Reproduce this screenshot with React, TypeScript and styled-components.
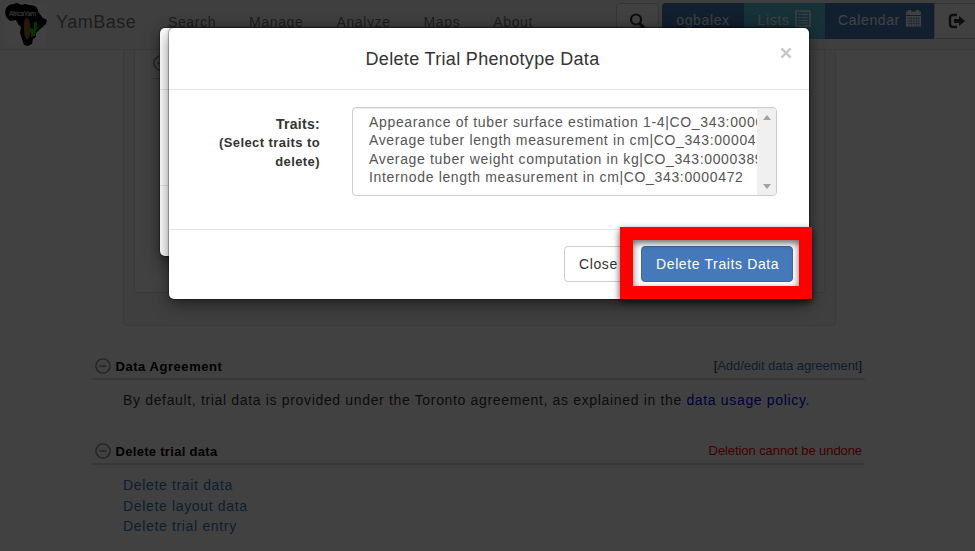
import React from "react";
import styled, { createGlobalStyle } from "styled-components";

const GlobalStyle = createGlobalStyle`
  * { box-sizing: border-box; }
  body {
    margin: 0;
    overflow: hidden;
    background: #fff;
    color: #333;
    font: 14px/20px "Liberation Sans", Arial, sans-serif;
    letter-spacing: 0.62px;
  }
`;

const Page = styled.div`
  position: relative;
  height: 551px;
  overflow: hidden;
  white-space: nowrap;
`;

const Navbar = styled.header`
  display: flex;
  height: 50px;
  background: #f8f8f8;
  border-bottom: 1px solid #e3e3e3;
`;

const Logo = styled.svg`
  width: 43px;
  height: 46px;
  margin: 1px 0 0 4px;
  flex: none;
`;

const Brand = styled.div`
  flex: none;
  width: 121px;
  padding: 12px 0 0 9px;
  font-size: 18px;
  letter-spacing: 0.5px;
  color: #777;
`;

const NavLinks = styled.nav`
  display: flex;
  flex: none;
  width: 448px;
  padding-top: 12px;
  gap: 33px;
  color: #777;
`;

const NavButtons = styled.div`
  display: flex;
  flex: none;
  padding-top: 3px;
`;

const NavButton = styled.div<{ $bg: string; $w: number; $left?: boolean; $outlined?: boolean; $gap?: number }>`
  display: flex;
  align-items: center;
  justify-content: center;
  gap: 6px;
  flex: none;
  width: ${(p) => p.$w}px;
  height: 36px;
  margin-right: ${(p) => p.$gap ?? 0}px;
  padding-bottom: 2px;
  color: ${(p) => (p.$outlined ? "#333" : "#fff")};
  background: ${(p) => p.$bg};
  border: ${(p) => (p.$outlined ? "1px solid #ccc" : "0")};
  border-radius: ${(p) => (p.$left ? "4px 0 0 4px" : p.$gap ? "4px" : "0")};

  svg {
    flex: none;
    position: relative;
    top: ${(p) => (p.$outlined ? "1px" : "-2px")};
  }
`;

const Well = styled.div`
  width: 713px;
  height: 276px;
  margin-left: 123px;
  padding: 0 10px 32px;
  background: #f5f5f5;
  border: 1px solid #e3e3e3;
  border-top: 0;
  border-radius: 0 0 4px 4px;
`;

const WellPanel = styled.div`
  height: 100%;
  padding: 5px 16px 0 18px;
  background: #fff;
  border: 1px solid #e3e3e3;
  border-top: 0;
  border-radius: 0 0 4px 4px;
`;

const PanelRule = styled.div`
  height: 24px;
  border-bottom: 1px solid #ccc;
`;

const Section = styled.section`
  width: 773px;
  margin-left: 92px;
  height: 85px;
`;

const Sections = styled.main`
  padding-top: 29px;
`;

const SectionHead = styled.div`
  display: flex;
  align-items: center;
  height: 25px;
  padding: 0 3px 2px;
  border-bottom: 2px solid #dcdcdc;
`;

const SectionTitle = styled.h3<{ $spacing: number }>`
  margin: 0 auto 0 4.5px;
  padding-top: 2px;
  color: #000;
  font-size: 13px;
  letter-spacing: ${(p) => p.$spacing}px;
`;

const SectionNote = styled.span<{ $danger?: boolean }>`
  font-size: 13px;
  letter-spacing: ${(p) => (p.$danger ? "-0.08px" : "-0.05px")};
  color: ${(p) => (p.$danger ? "#f00" : "#333")};
`;

const SectionBody = styled.div`
  padding: 10px 0 0 31px;
  line-height: 20.7px;
  letter-spacing: 0.66px;
`;

const Link = styled.a<{ $plain?: boolean }>`
  color: ${(p) => (p.$plain ? "#0000ee" : "#337ab7")};
`;

const LinkRow = styled.div`
  height: 20.7px;
`;

const Backdrop = styled.div`
  position: absolute;
  inset: 0;
  background: rgba(0, 0, 0, 0.745);
`;

const Dialog = styled.div<{ $x: number; $h: number }>`
  position: absolute;
  left: ${(p) => p.$x}px;
  top: 28px;
  width: 640px;
  height: ${(p) => p.$h}px;
  display: flex;
  flex-direction: column;
  background: #fff;
  border-radius: 5px;
  box-shadow: 0 5px 15px rgba(0, 0, 0, 0.5), 0 0 1px 1px rgba(0, 0, 0, 0.3);
`;

const DialogHead = styled.div`
  display: flex;
  flex: none;
  align-items: center;
  height: 62px;
  padding: 0 17px 0 16px;
  border-bottom: 1px solid #e5e5e5;
`;

const DialogTitle = styled.h4`
  flex: 1;
  margin: 0;
  font-size: 18px;
  font-weight: 400;
  letter-spacing: 0.33px;
  text-align: center;
`;

const CloseIcon = styled.svg`
  width: 12px;
  height: 12px;
  margin-bottom: 11px;
`;

const DialogBody = styled.div`
  display: flex;
  flex: 1;
  align-items: flex-start;
  gap: 32px;
  padding: 17px 0 0 41px;
`;

const FieldLabel = styled.label`
  width: 110px;
  padding-top: 7px;
  font-weight: 700;
  letter-spacing: 0.3px;
  text-align: right;
`;

const LabelHint = styled.div`
  font-size: 13px;
  line-height: 18.5px;
  letter-spacing: 0.42px;
`;

const ListBox = styled.div`
  display: flex;
  width: 425px;
  height: 89px;
  overflow: hidden;
  color: #555;
  border: 1px solid #ccc;
  border-radius: 4px;
  box-shadow: inset 0 1px 1px rgba(0, 0, 0, 0.075);
`;

const Options = styled.div`
  flex: 1;
  min-width: 0;
  overflow: hidden;
  padding: 5px 0 0 16px;
`;

const Option = styled.div<{ $spacing: number }>`
  height: 18.4px;
  line-height: 18.4px;
  letter-spacing: ${(p) => p.$spacing}px;
`;

const Scrollbar = styled.div`
  display: flex;
  flex: none;
  flex-direction: column;
  align-items: center;
  justify-content: space-between;
  width: 19px;
  margin-top: 1px;
  padding: 6px 0;
  background: #f0f0f0;
`;

const Arrow = styled.i<{ $down?: boolean }>`
  border: 4.5px solid transparent;
  border-top: ${(p) => (p.$down ? "5px solid #a3a3a3" : "0")};
  border-bottom: ${(p) => (p.$down ? "0" : "5px solid #a3a3a3")};
`;

const DialogFoot = styled.div<{ $h: number }>`
  display: flex;
  flex: none;
  justify-content: flex-end;
  gap: 9px;
  height: ${(p) => p.$h}px;
  padding: 16px 16px 0;
  border-top: 1px solid #e5e5e5;
`;

const Button = styled.div<{ $primary?: boolean; $w: number }>`
  width: ${(p) => p.$w}px;
  height: 36px;
  padding-left: 14px;
  line-height: 34px;
  border: 1px solid ${(p) => (p.$primary ? "#3b6ba6" : "#ccc")};
  border-radius: 4px;
  color: ${(p) => (p.$primary ? "#fff" : "#333")};
  background: ${(p) => (p.$primary ? "#4679ba" : "#fff")};
`;

const Highlight = styled.div`
  position: absolute;
  left: 620px;
  top: 227px;
  width: 192px;
  height: 72px;
  border: 13px solid #f00;
  box-shadow: 0 3px 7px rgba(0, 0, 0, 0.7), inset 0 3px 7px rgba(0, 0, 0, 0.6);
`;

const CollapseIcon = () => (
  <svg width="16" height="16" viewBox="0 0 16 16" fill="none" stroke="#888" strokeWidth="1.4">
    <circle cx="8" cy="8" r="7.1" />
    <path d="M4.5 8h7" />
  </svg>
);

const traits = [
  { name: "Appearance of tuber surface estimation 1-4|CO_343:0000036", spacing: 0.66 },
  { name: "Average tuber length measurement in cm|CO_343:0000453", spacing: 0.63 },
  { name: "Average tuber weight computation in kg|CO_343:0000389", spacing: 0.65 },
  { name: "Internode length measurement in cm|CO_343:0000472", spacing: 0.66 },
];

export default function App() {
  return (
    <Page>
      <GlobalStyle />
      <Navbar>
        <Logo viewBox="0 0 43 46">
          <path fill="#fff" d="M0 2h43v44H0z" />
          <path
            fill="#000"
            d="M5 4l8-2 5 2 3-1 4 1 6 1 2 2 2 5 4 5 4 2-1 4-7 6-3 3 0 4-3 2-1 5-4 2-4-1-2-6-2-6 1-6-3-3-2-4-6 1-4-4-1-5 1-4z"
          />
          <path fill="#a5603c" d="M22.5 17c3 0 4 6 4 11s-1 10-3.500 10-3-8-3-11 0-10 2.500-10z" />
          <path fill="#18c000" d="M30 21h3v4l1 2-2 3-1 5-4 1v-4l-2-2 1-3 4 1z" />
          <text x="5" y="15" fill="#fff" fontFamily="Liberation Sans" fontSize="6.5" letterSpacing="0" textLength="27">
            AfricaYam
          </text>
        </Logo>
        <Brand>YamBase</Brand>
        <NavLinks>
          <span>Search</span>
          <span>Manage</span>
          <span>Analyze</span>
          <span>Maps</span>
          <span>About</span>
        </NavLinks>
        <NavButtons>
          <NavButton $bg="#fff" $w={43} $outlined $gap={3}>
            <svg width="17" height="17" viewBox="0 0 17 17" fill="none" stroke="#333">
              <circle cx="7" cy="6.500" r="5" strokeWidth="2.200" />
              <path d="M10.500 10.500l4.500 4.500" strokeWidth="3.200" />
            </svg>
          </NavButton>
          <NavButton $bg="#4479ba" $w={82} $left>ogbalex</NavButton>
          <NavButton $bg="#5bc0de" $w={81}>
            Lists
            <svg width="16" height="17" viewBox="0 0 16 17" fill="none" stroke="#fff">
              <path d="M1 1h14v15h-14z" strokeWidth="1.500" />
              <path d="M3.500 4.500h2m1 0h6M3.500 7.500h2m1 0h6M3.500 10.500h2m1 0h6M3.500 13h2m1 0h6" />
            </svg>
          </NavButton>
          <NavButton $bg="#4479ba" $w={109}>
            Calendar
            <svg width="15" height="17" viewBox="0 0 15 17">
              <path fill="#fff" d="M0 1.500h2V0h3v1.500h5V0h3v1.500h2V5H0zM0 6h15v10.500H0z" />
              <path stroke="#4479ba" strokeWidth=".5" d="M1 8.500h13M1 11h13M1 13.500h13M3 7v9M5.500 7v9M8 7v9M10.500 7v9M12.700 7v9" />
            </svg>
          </NavButton>
          <NavButton $bg="#fff" $w={45} $outlined>
            <svg width="18" height="16" viewBox="0 0 18 16">
              <path d="M9 2H5Q2 2 2 5v6q0 3 3 3h4" fill="none" stroke="#333" strokeWidth="2.400" />
              <path d="M6 6h5V3l6 5-6 5v-3H6z" fill="#333" />
            </svg>
          </NavButton>
        </NavButtons>
      </Navbar>

      <Well>
        <WellPanel>
          <PanelRule>
            <CollapseIcon />
          </PanelRule>
        </WellPanel>
      </Well>

      <Sections>
        <Section>
          <SectionHead>
            <CollapseIcon />
            <SectionTitle $spacing={0.55}>Data Agreement</SectionTitle>
            <SectionNote>
              [<Link>Add/edit data agreement</Link>]
            </SectionNote>
          </SectionHead>
          <SectionBody>
            By default, trial data is provided under the Toronto agreement, as explained in the{" "}
            <Link $plain>data usage policy</Link>.
          </SectionBody>
        </Section>
        <Section>
          <SectionHead>
            <CollapseIcon />
            <SectionTitle $spacing={0.3}>Delete trial data</SectionTitle>
            <SectionNote $danger>Deletion cannot be undone</SectionNote>
          </SectionHead>
          <SectionBody>
            <LinkRow><Link>Delete trait data</Link></LinkRow>
            <LinkRow><Link>Delete layout data</Link></LinkRow>
            <LinkRow><Link>Delete trial entry</Link></LinkRow>
          </SectionBody>
        </Section>
      </Sections>

      <Backdrop />

      <Dialog $x={160} $h={228}>
        <DialogHead />
        <DialogBody />
        <DialogFoot $h={71} />
      </Dialog>

      <Dialog $x={169} $h={271}>
        <DialogHead>
          <DialogTitle>Delete Trial Phenotype Data</DialogTitle>
          <CloseIcon viewBox="0 0 13 13" stroke="#c8c8c8" strokeWidth="2.600">
            <path d="M1.500 1.500l10 10M11.500 1.500l-10 10" />
          </CloseIcon>
        </DialogHead>
        <DialogBody>
          <FieldLabel>
            Traits:
            <LabelHint>(Select traits to<br />delete)</LabelHint>
          </FieldLabel>
          <ListBox>
            <Options>
              {traits.map((t) => (
                <Option key={t.name} $spacing={t.spacing}>{t.name}</Option>
              ))}
            </Options>
            <Scrollbar>
              <Arrow />
              <Arrow $down />
            </Scrollbar>
          </ListBox>
        </DialogBody>
        <DialogFoot $h={70}>
          <Button $w={68}>Close</Button>
          <Button $w={152} $primary>Delete Traits Data</Button>
        </DialogFoot>
      </Dialog>

      <Highlight />
    </Page>
  );
}
